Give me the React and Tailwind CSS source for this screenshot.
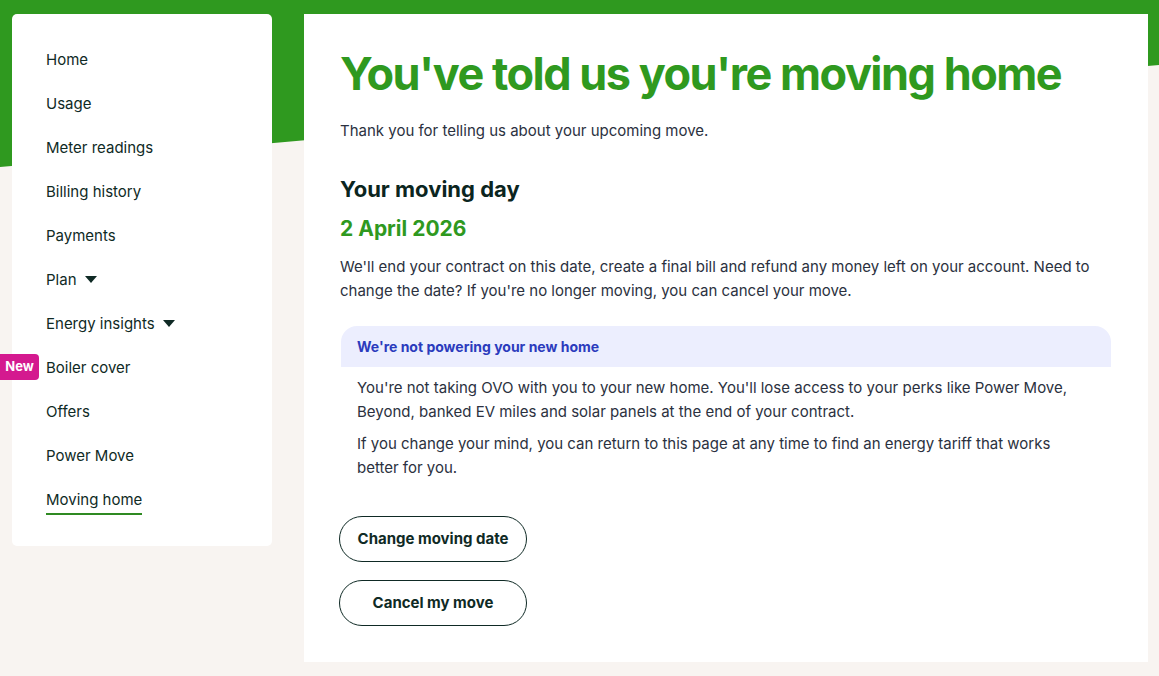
import { useState } from 'react';

const navItems = [
  { label: 'Home' },
  { label: 'Usage' },
  { label: 'Meter readings' },
  { label: 'Billing history' },
  { label: 'Payments' },
  { label: 'Plan', caret: true },
  { label: 'Energy insights', caret: true },
  { label: 'Boiler cover', badge: 'New' },
  { label: 'Offers' },
  { label: 'Power Move' },
  { label: 'Moving home', active: true },
];

function Caret() {
  return (
    <svg width="12" height="7" viewBox="0 0 12 7" className="ml-[8px] mt-[-2px]">
      <path d="M0 0h12L6 7z" fill="#0f2a25" />
    </svg>
  );
}

export default function App() {
  const [active] = useState('Moving home');

  return (
    <div className="relative min-h-screen bg-[#f8f4f1] font-['Inter',sans-serif] text-[#0f2a25]">
      <div className="absolute inset-x-0 top-0 h-[170px] bg-[#2f991f] [clip-path:polygon(0_0,100%_0,100%_65px,0_167px)]" />

      <div className="relative flex items-start gap-[32px] pl-[12px] pr-[11px] pt-[14px] pb-[14px]">
        <nav className="w-[260px] shrink-0 rounded-[5px] bg-white pt-[24px] pb-[24px]">
          {navItems.map(item => (
            <div key={item.label} className="relative flex h-[44px] items-center pl-[34px]">
              {item.badge && (
                <span className="absolute left-[-12px] top-[8px] flex h-[26px] w-[39px] items-center justify-center rounded-r-[4px] bg-[#d4198f] text-[13px] font-bold text-white">
                  {item.badge}
                </span>
              )}
              <span
                className={
                  item.label === active
                    ? 'border-b-2 border-[#2f8a22] pb-[3px] pt-[5px] text-[15px] leading-[20px]'
                    : 'text-[15px] leading-[20px]'
                }
              >
                {item.label}
              </span>
              {item.caret && <Caret />}
            </div>
          ))}
        </nav>

        <main className="flex-1 bg-white pl-[36px] pr-[36px] pt-[28px] pb-[36px]">
          <h1 className="whitespace-nowrap text-[45px] font-bold leading-[64px] tracking-[-1.5px] text-[#2f991f]">
            You've told us you're moving home
          </h1>
          <p className="mt-[13px] text-[15px] leading-[24px] text-[#2b3140]">
            Thank you for telling us about your upcoming move.
          </p>

          <h2 className="mt-[31px] text-[22px] font-bold leading-[30px] text-[#0b2520]">Your moving day</h2>
          <p className="mt-[10px] text-[21px] font-bold leading-[30px] text-[#2f991f]">2 April 2026</p>
          <p className="mt-[11px] max-w-[780px] text-[15px] leading-[24px] text-[#2b3140]">
            We'll end your contract on this date, create a final bill and refund any money left on your account. Need to
            change the date? If you're no longer moving, you can cancel your move.
          </p>

          <div className="mt-[23px] ml-[1px] w-[770px]">
            <div className="rounded-t-[16px] bg-[#eceefe] px-[16px] py-[10px] text-[14px] font-bold leading-[21px] text-[#2b3bbd]">
              We're not powering your new home
            </div>
            <div className="px-[16px] pt-[9px] text-[15px] leading-[24px] text-[#2b3140]">
              <p>
                You're not taking OVO with you to your new home. You'll lose access to your perks like Power Move,
                Beyond, banked EV miles and solar panels at the end of your contract.
              </p>
              <p className="mt-[8px]">
                If you change your mind, you can return to this page at any time to find an energy tariff that works
                better for you.
              </p>
            </div>
          </div>

          <div className="mt-[36px] flex flex-col items-start gap-[18px]">
            <button className="ml-[-1px] h-[46px] w-[188px] rounded-full border border-[#0f2a25] text-[15px] font-bold text-[#0f2a25]">
              Change moving date
            </button>
            <button className="ml-[-1px] h-[46px] w-[188px] rounded-full border border-[#0f2a25] text-[15px] font-bold text-[#0f2a25]">
              Cancel my move
            </button>
          </div>
        </main>
      </div>
    </div>
  );
}
